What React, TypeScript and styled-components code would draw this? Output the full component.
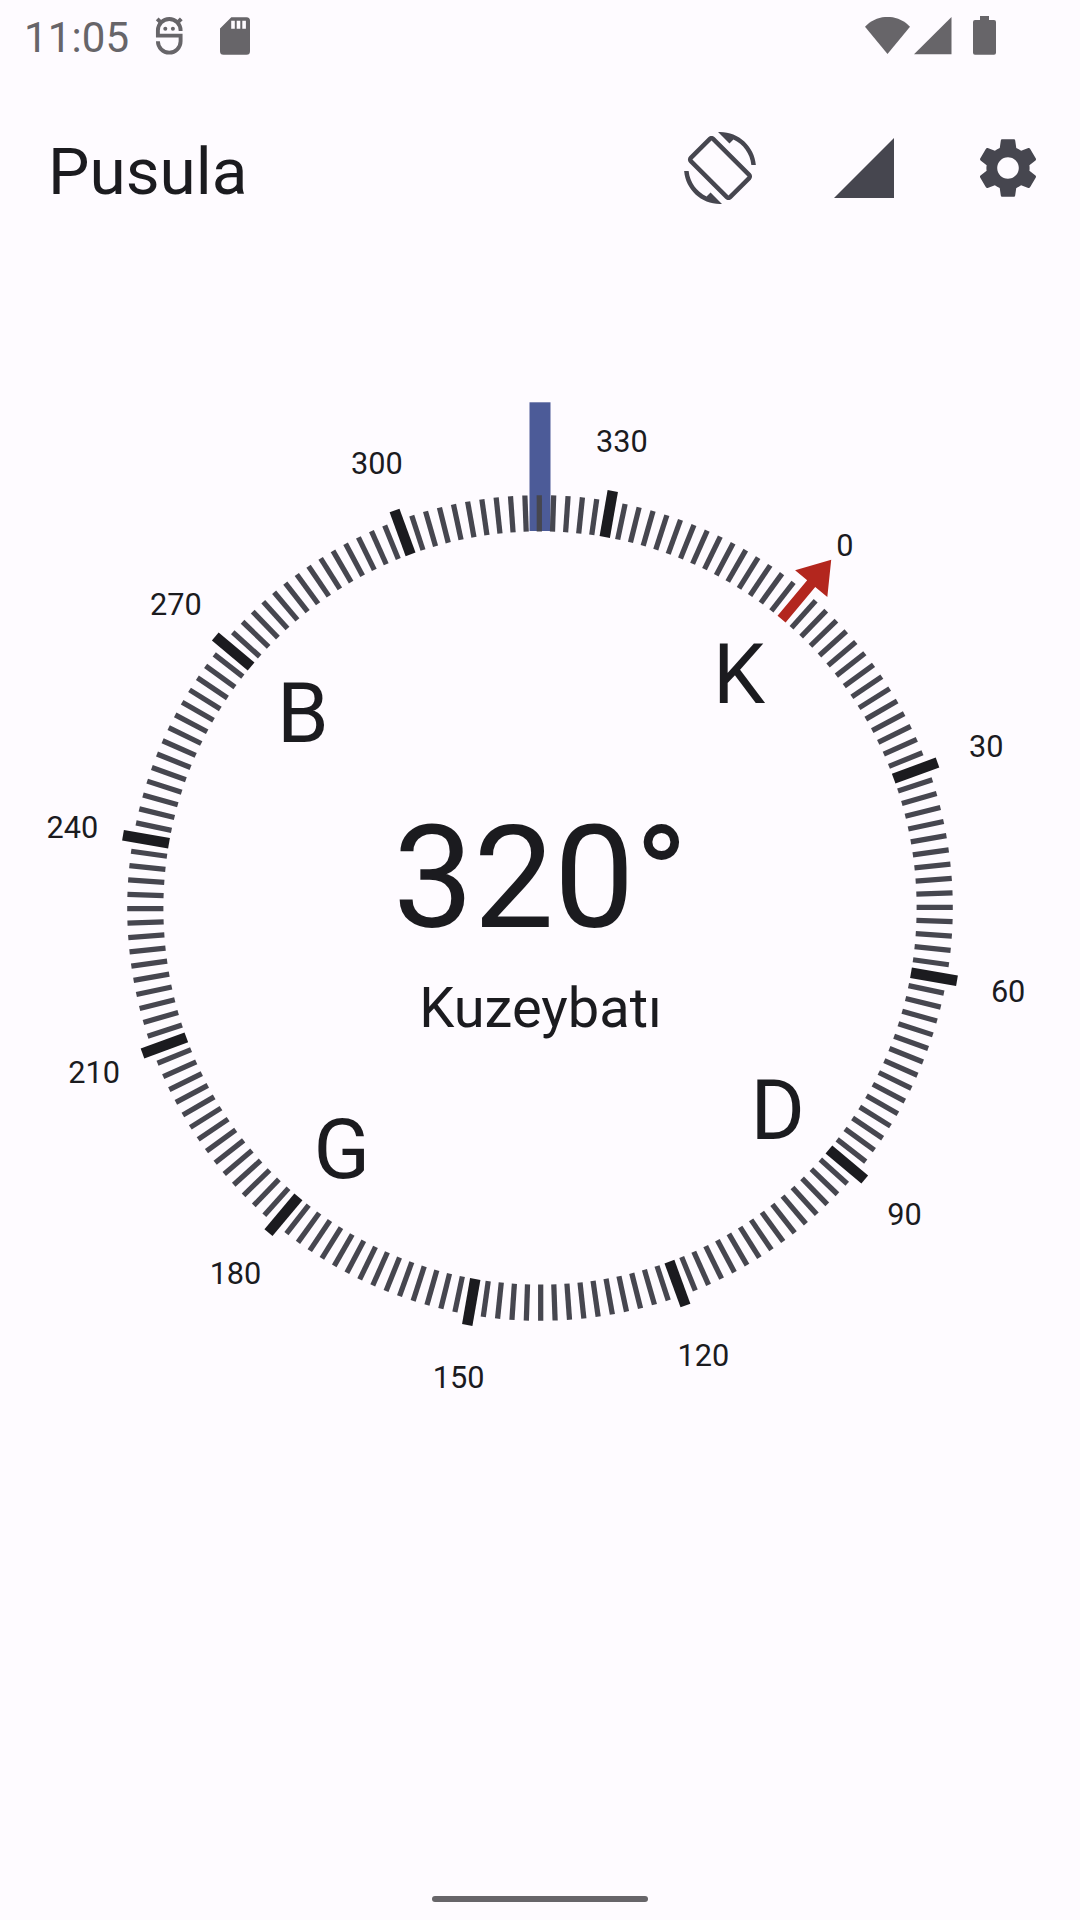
import React from "react";
import styled, { createGlobalStyle } from "styled-components";

const GlobalStyle = createGlobalStyle`
  * { box-sizing: border-box; }
  html, body { margin: 0; padding: 0; background: #fefbff; }
`;

const Screen = styled.div`
  display: flex;
  flex-direction: column;
  width: 1080px;
  height: 1920px;
  overflow: hidden;
  background: #fefbff;
  color: #1b1b1f;
  font-family: Roboto, "Noto Sans", sans-serif;
`;

const StatusBar = styled.header`
  display: flex;
  align-items: center;
  justify-content: space-between;
  height: 74px;
  padding: 0 84px 0 24px;
  color: #676569;
`;

const StatusGroup = styled.div<{ $gap: number }>`
  display: flex;
  align-items: center;
  gap: ${(p) => p.$gap}px;
`;

const Clock = styled.span`
  width: 130px;
  padding-top: 2px;
  font-size: 42px;
  line-height: 50px;
  letter-spacing: 0.1px;
`;

const Icon = styled.svg`
  display: block;
  flex: none;
  fill: currentColor;
`;

const BatteryIcon = styled(Icon)`
  margin-left: 17px;
`;

const AppBar = styled.div`
  display: flex;
  align-items: center;
  justify-content: space-between;
  height: 188px;
  padding: 0 36px 0 48px;
`;

const Title = styled.h1`
  margin: 8px 0 0;
  font-size: 65.7px;
  font-weight: 400;
  line-height: 76px;
`;

const Actions = styled.div`
  display: flex;
  gap: 72px;
  color: #46464f;
`;

const ActionButton = styled.button`
  padding: 0;
  border: 0;
  background: none;
  color: inherit;
`;

const CompassArea = styled.main`
  display: grid;
  flex: 1;
  grid-template: 1292px / 1fr;
  & > * { grid-area: 1 / 1; }
`;

const Dial = styled.svg`
  display: block;
  width: 1080px;
  height: 1292px;
`;

const Label = styled.text<{ $size: number }>`
  font-family: Roboto, "Noto Sans", sans-serif;
  font-size: ${(p) => p.$size}px;
  text-anchor: middle;
  fill: #1b1b1f;
`;

const Readout = styled.div`
  display: flex;
  flex-direction: column;
  align-items: center;
  padding: 528px 0 0 1px;
`;

const Degrees = styled.div`
  font-size: 143.3px;
  line-height: 176px;
`;

const Direction = styled.div`
  margin-top: 8px;
  font-size: 56px;
  line-height: 68px;
`;

const NavigationBar = styled.footer`
  display: flex;
  justify-content: center;
  height: 24px;
`;

const Handle = styled.div`
  width: 216px;
  height: 6px;
  border-radius: 3px;
  background: #676569;
`;

const HEADING = 320.1;
const CX = 540;
const CY = 646;

const rad = (deg: number) => ((deg - HEADING) * Math.PI) / 180;
const at = (deg: number, r: number) => ({
  x: CX + r * Math.sin(rad(deg)),
  y: CY - r * Math.cos(rad(deg)),
});

const ticks = Array.from({ length: 180 }, (_, i) => i * 2).filter((d) => d !== 0);
const numbers = Array.from({ length: 12 }, (_, i) => i * 30);
const cardinals = [
  { deg: 0, name: "K" },
  { deg: 90, name: "D" },
  { deg: 180, name: "G" },
  { deg: 270, name: "B" },
];

function Compass() {
  return (
    <Dial viewBox="0 0 1080 1292">
      <rect x="529.5" y="140.3" width="21" height="128.7" fill="#4c5b98" />
      {ticks.map((d) => {
        const major = d % 30 === 0;
        const w = major ? 10.5 : 5.25;
        const outer = major ? 423.3 : 412.8;
        return (
          <rect
            key={d}
            x={CX - w / 2}
            y={CY - outer}
            width={w}
            height={outer - 376.6}
            fill={major ? "#1b1b1f" : "#46464f"}
            transform={`rotate(${d - HEADING} ${CX} ${CY})`}
          />
        );
      })}
      <path
        d="M-5.25-376.6V-422.8H-21L0-454L21-422.8H5.25V-376.6Z"
        fill="#b3261e"
        transform={`translate(${CX} ${CY}) rotate(${-HEADING})`}
      />
      {numbers.map((d) => {
        const p = at(d, 475);
        return (
          <Label key={d} $size={30.7} x={p.x + 0.2} y={p.y + 12}>
            {d}
          </Label>
        );
      })}
      {cardinals.map(({ deg, name }) => {
        const p = at(deg, 309.5);
        return (
          <Label key={name} $size={83} x={p.x + 0.4} y={p.y + 32.5}>
            {name}
          </Label>
        );
      })}
    </Dial>
  );
}

export default function App() {
  return (
    <Screen>
      <GlobalStyle />
      <StatusBar>
        <StatusGroup $gap={35}>
          <StatusGroup $gap={0}>
            <Clock>11:05</Clock>
            <Icon width="30" height="40" viewBox="0 0 30 40">
              <g fill="none" stroke="currentColor" strokeWidth="3.9">
                <path d="M26.600 14V13.300A11.350 11.350 0 0 0 3.900 13.300V18.600H26.600V24.300A11.350 11.350 0 0 1 3.900 24.300" />
                <path d="M3.200 1.900L7.500 6.200M27.300 1.900L23 6.200" />
              </g>
              <circle cx="11.3" cy="11.7" r="2" />
              <circle cx="18.9" cy="11.7" r="2" />
            </Icon>
          </StatusGroup>
          <Icon width="32" height="40" viewBox="0 0 32 40">
            <path
              fillRule="evenodd"
              d="M12.300 0.200H27.500Q31 0.200 31 3.700V34.300Q31 37.800 27.500 37.800H4.500Q1 37.800 1 34.300V11.500ZM12.200 3.800V11.700H15.800V3.800ZM17.700 3.800V11.700H21.300V3.800ZM23.300 3.800V11.700H26.900V3.800Z"
            />
          </Icon>
        </StatusGroup>
        <StatusGroup $gap={4}>
          <Icon width="45" height="40" viewBox="0 0 45 40">
            <path d="M0 9.800C12-3.400 33-3.400 45 9.800L22.500 37Z" />
          </Icon>
          <Icon width="38" height="40" viewBox="0 0 38 40">
            <path d="M0 37.200H37.500V0Z" />
          </Icon>
          <BatteryIcon width="23" height="42" viewBox="0 0 23 42">
            <path d="M7 0H16V4H21Q23 4 23 6V36.700Q23 38.700 21 38.700H2Q0 38.700 0 36.700V6Q0 4 2 4H7Z" />
          </BatteryIcon>
        </StatusGroup>
      </StatusBar>
      <AppBar>
        <Title>Pusula</Title>
        <Actions>
          <ActionButton>
            <Icon width="72" height="72" viewBox="0 0 24 24">
              <path d="M16.48 2.52c3.27 1.55 5.61 4.72 5.97 8.48h1.5C23.44 4.84 18.29 0 12 0l-.66.03 3.81 3.81 1.33-1.32zm-6.25-.77c-.59-.59-1.54-.59-2.12 0L1.75 8.11c-.59.59-.59 1.54 0 2.12l12.02 12.02c.59.59 1.54.59 2.12 0l6.36-6.36c.59-.59.59-1.54 0-2.12L10.23 1.75zm4.6 19.44L2.81 9.17l6.36-6.36 12.02 12.02-6.36 6.36zm-7.31.29C4.25 19.94 1.91 16.76 1.55 13H.05C.56 19.16 5.71 24 12 24l.66-.03-3.81-3.81-1.33 1.32z" />
            </Icon>
          </ActionButton>
          <ActionButton>
            <Icon width="72" height="72" viewBox="0 0 24 24">
              <path d="M2 22h20V2z" />
            </Icon>
          </ActionButton>
          <ActionButton>
            <Icon width="72" height="72" viewBox="0 0 24 24">
              <path d="M19.14 12.94c.04-.3.06-.61.06-.94 0-.32-.02-.64-.07-.94l2.03-1.58c.18-.14.23-.41.12-.61l-1.92-3.32c-.12-.22-.37-.29-.59-.22l-2.39.96c-.5-.38-1.03-.7-1.62-.94l-.36-2.54c-.04-.24-.24-.41-.48-.41h-3.84c-.24 0-.43.17-.47.41l-.36 2.54c-.59.24-1.13.57-1.62.94l-2.39-.96c-.22-.08-.47 0-.59.22L2.74 8.87c-.12.21-.08.47.12.61l2.03 1.58c-.05.3-.09.63-.09.94s.02.64.07.94l-2.03 1.58c-.18.14-.23.41-.12.61l1.92 3.32c.12.22.37.29.59.22l2.39-.96c.5.38 1.03.7 1.62.94l.36 2.54c.05.24.24.41.48.41h3.84c.24 0 .44-.17.47-.41l.36-2.54c.59-.24 1.13-.56 1.62-.94l2.39.96c.22.08.47 0 .59-.22l1.92-3.32c.12-.22.07-.47-.12-.61l-2.01-1.58zM12 15.600c-1.980 0-3.600-1.620-3.600-3.600s1.620-3.600 3.600-3.600 3.600 1.620 3.600 3.600-1.620 3.600-3.600 3.600z" />
            </Icon>
          </ActionButton>
        </Actions>
      </AppBar>
      <CompassArea>
        <Compass />
        <Readout>
          <Degrees>320°</Degrees>
          <Direction>Kuzeybatı</Direction>
        </Readout>
      </CompassArea>
      <NavigationBar>
        <Handle />
      </NavigationBar>
    </Screen>
  );
}
